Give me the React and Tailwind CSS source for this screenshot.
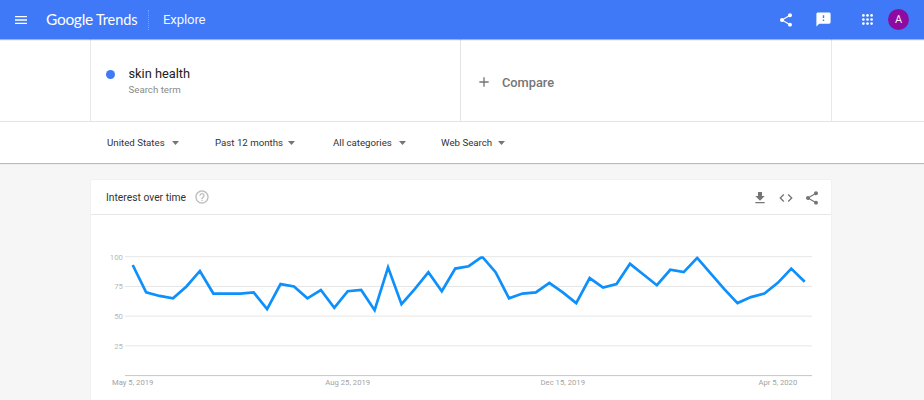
import React from "react";
import {
  MdAdd,
  MdCode,
  MdFeedback,
  MdFileDownload,
  MdHelpOutline,
  MdMenu,
  MdShare,
} from "react-icons/md";

const interest = [
  93, 70, 67, 65, 75, 88, 69, 69, 69, 70, 56, 77, 75, 65, 72, 57, 71, 72, 55,
  91, 60, 73, 87, 71, 90, 92, 100, 87, 65, 69, 70, 78, 70, 61, 82, 74, 77, 94,
  85, 76, 89, 87, 99, 86, 73, 61, 66, 69, 78, 90, 79,
];

const xLabels = [
  { week: 0, text: "May 5, 2019" },
  { week: 16, text: "Aug 25, 2019" },
  { week: 32, text: "Dec 15, 2019" },
  { week: 48, text: "Apr 5, 2020" },
];

const weekX = (week) => 41.7 + week * 13.44;
const valueY = (value) => 160.6 - value * 1.189;

const AppsIcon = () => (
  <svg viewBox="0 0 11 11" className="mr-[15px] size-[11px]" fill="currentColor">
    {[1.4, 5.5, 9.6].map((y) =>
      [1.4, 5.5, 9.6].map((x) => (
        <circle key={`${x}-${y}`} cx={x} cy={y} r="1.35" />
      ))
    )}
  </svg>
);

const Header = () => {
  return (
    <header className="relative z-10 flex h-[39px] items-center bg-[#4079f7] text-white shadow-[0_1px_1px_rgba(0,0,0,0.3)]">
      <MdMenu className="ml-[13px] size-4" />
      <div className="ml-[17px] flex w-[102px] items-baseline whitespace-nowrap font-['Lato'] leading-5">
        <span className="text-[15.5px] tracking-[-0.3px]">Google</span>
        <span className="ml-[3px] text-[14.5px] tracking-[-0.1px]">Trends</span>
      </div>
      <div className="h-5 border-l border-dotted border-white/30" />
      <h1 className="ml-[14px] mt-px text-[13.2px] leading-5 tracking-[-0.15px] text-white/95">
        Explore
      </h1>
      <div className="ml-auto flex items-center pr-[15px]">
        <MdShare className="mr-[21px] size-4" />
        <MdFeedback className="mr-[30px] size-[17px]" />
        <AppsIcon />
        <div className="flex size-[21px] items-center justify-center rounded-full bg-[#8e0ba1] pt-px text-[11px] text-white/95">
          A
        </div>
      </div>
    </header>
  );
};

const SearchTerms = () => {
  return (
    <div className="h-[83px] border-b border-[#e4e4e4]">
      <div className="ml-[90px] flex h-full w-[742px] border-x border-[#e8e8e8]">
        <div className="flex w-[369px] pl-[15px] pt-[27px]">
          <div className="mt-[4px] size-[9px] rounded-full bg-[#4079f7]" />
          <div className="ml-[13.5px]">
            <div className="text-[12.8px] leading-4 text-[#212121]">
              skin health
            </div>
            <div className="text-[9.7px] leading-[15px] text-[#8a8a8a]">
              Search term
            </div>
          </div>
        </div>
        <div className="flex flex-1 items-center border-l border-[#e4e4e4] pl-[15px] pt-[4px] text-[#757575]">
          <MdAdd className="size-4" />
          <span className="ml-[10px] pt-px text-[12.8px] font-medium">
            Compare
          </span>
        </div>
      </div>
    </div>
  );
};

const Filter = ({ label, className }) => {
  return (
    <div
      className={`flex items-center justify-between whitespace-nowrap ${className}`}
    >
      <span>{label}</span>
      <svg viewBox="0 0 7 4" className="h-1 w-[7px]" fill="#757575">
        <path d="M0 0h7L3.5 4z" />
      </svg>
    </div>
  );
};

const Filters = () => {
  return (
    <div className="h-[41px] shadow-[0_1px_1px_rgba(0,0,0,0.24)]">
      <div className="ml-[91px] flex h-full w-[740px] items-center pl-4 pt-px text-[9.7px] text-[#333]">
        <Filter label="United States" className="w-[72px]" />
        <Filter label="Past 12 months" className="ml-[36px] w-[80px]" />
        <Filter label="All categories" className="ml-[38px] w-[73px]" />
        <Filter label="Web Search" className="ml-[35px] w-[64px]" />
      </div>
    </div>
  );
};

const TrendChart = () => {
  const points = interest.map((v, i) => `${weekX(i)},${valueY(v)}`).join(" ");

  return (
    <svg width="740" height="185" className="block">
      <clipPath id="plot-area">
        <rect x="34" y="41.2" width="687" height="120" />
      </clipPath>
      {[100, 75, 50, 25].map((v) => (
        <g key={v}>
          <line
            x1="34"
            x2="721"
            y1={valueY(v)}
            y2={valueY(v)}
            stroke="#e6e6e6"
          />
          <text
            x="32"
            y={valueY(v) + 3}
            textAnchor="end"
            fontSize="7.8"
            fill="#b8b8b8"
          >
            {v}
          </text>
        </g>
      ))}
      <line x1="34" x2="721" y1="160.6" y2="160.6" stroke="#c6c6c6" />
      {xLabels.map(({ week, text }) => (
        <text
          key={week}
          x={weekX(week)}
          y="169.5"
          textAnchor="middle"
          fontSize="7.7"
          fill="#a3a3a3"
        >
          {text}
        </text>
      ))}
      <polyline
        points={points}
        fill="none"
        stroke="#0d90fb"
        strokeWidth="2.7"
        clipPath="url(#plot-area)"
      />
    </svg>
  );
};

const App = () => {
  return (
    <div className="h-[400px] w-[924px] overflow-hidden bg-[#f6f6f6] font-['Roboto',sans-serif]">
      <Header />
      <div className="bg-white">
        <SearchTerms />
        <Filters />
      </div>
      <div className="ml-[91px] mt-[17px] h-[240px] w-[740px] bg-white shadow-[0_0_1px_rgba(0,0,0,0.12)]">
        <div className="flex h-[35px] items-center border-b border-[#e6e6e6] pl-[15px] pr-[11px]">
          <h2 className="pt-px text-[10.3px] text-[#333]">Interest over time</h2>
          <MdHelpOutline className="mb-px ml-[8px] size-4 text-[#bdbdbd]" />
          <div className="ml-auto flex items-center gap-[10px] pt-px text-[#757575]">
            <MdFileDownload className="size-4" />
            <MdCode className="size-4" />
            <MdShare className="size-4" />
          </div>
        </div>
        <TrendChart />
      </div>
    </div>
  );
};

export default App;
